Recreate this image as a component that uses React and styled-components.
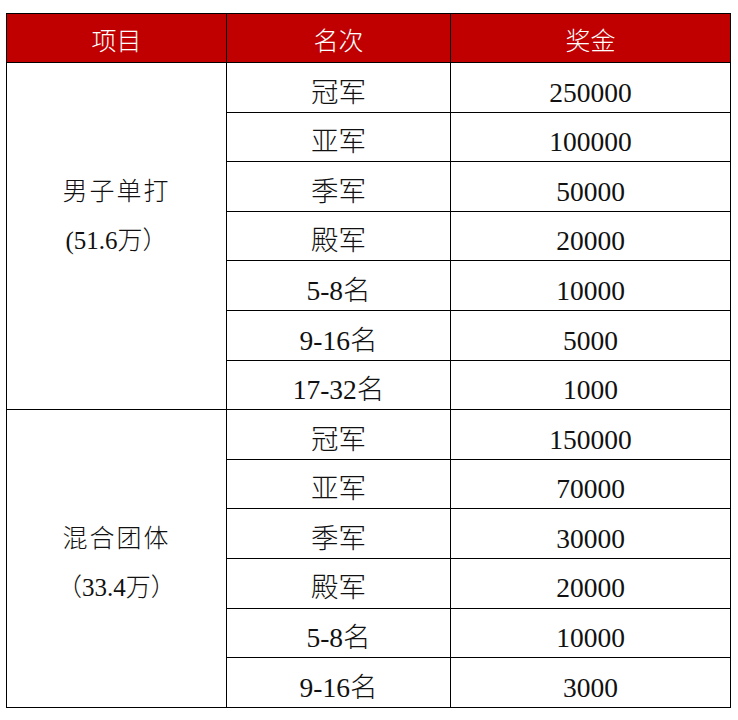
import styled, { createGlobalStyle } from "styled-components";

const GlobalStyle = createGlobalStyle`
    body {
        margin: 0;
        background: #fff;
        font-family: "Liberation Serif", "Noto Sans CJK SC", serif;
    }
`

const Wrapper = styled.div`
    padding: 13px 0 0 6px;
`

const Table = styled.table`
    border-collapse: collapse;
    width: 724px;
    table-layout: fixed;
    font-size: 27.5px;
    color: #111;
`

const HeadCell = styled.th`
    background: #c00000;
    color: #fff;
    font-weight: 300;
    height: 46px;
    padding: 2px 0 0;
    border: 1px solid #000;
    font-family: "Liberation Serif", "Noto Sans CJK SC", serif;
    font-size: 25px;
`

const Cell = styled.td`
    height: 38.6px;
    padding: 10px 0 0;
    border: 1px solid #000;
    text-align: center;
    vertical-align: middle;
    line-height: 1;
    font-weight: 300;
`

const GroupCell = styled.td`
    padding: ${(p) => p.$top}px 0 ${(p) => p.$bottom}px 0;
    border: 1px solid #000;
    text-align: center;
    vertical-align: middle;
    line-height: 49px;
    font-size: 25px;
    font-weight: 300;
`

const GroupName = styled.div`
    letter-spacing: 2px;
`

const groups = [
    {
        name: "男子单打",
        total: "(51.6万）",
        top: 0,
        bottom: 40,
        rows: [
            ["冠军", "250000"],
            ["亚军", "100000"],
            ["季军", "50000"],
            ["殿军", "20000"],
            ["5-8名", "10000"],
            ["9-16名", "5000"],
            ["17-32名", "1000"],
        ],
    },
    {
        name: "混合团体",
        total: "（33.4万）",
        top: 10,
        bottom: 0,
        rows: [
            ["冠军", "150000"],
            ["亚军", "70000"],
            ["季军", "30000"],
            ["殿军", "20000"],
            ["5-8名", "10000"],
            ["9-16名", "3000"],
        ],
    },
];

function App() {
    return (
        <Wrapper>
            <GlobalStyle />
            <Table>
                <colgroup>
                    <col style={{ width: 220 }} />
                    <col style={{ width: 224 }} />
                    <col style={{ width: 280 }} />
                </colgroup>
                <thead>
                    <tr>
                        <HeadCell>项目</HeadCell>
                        <HeadCell>名次</HeadCell>
                        <HeadCell>奖金</HeadCell>
                    </tr>
                </thead>
                <tbody>
                    {groups.map((g) =>
                        g.rows.map((r, i) => (
                            <tr key={g.name + i}>
                                {i === 0 && (
                                    <GroupCell rowSpan={g.rows.length} $top={g.top} $bottom={g.bottom}>
                                        <GroupName>{g.name}</GroupName>
                                        <div>{g.total}</div>
                                    </GroupCell>
                                )}
                                <Cell>{r[0]}</Cell>
                                <Cell>{r[1]}</Cell>
                            </tr>
                        ))
                    )}
                </tbody>
            </Table>
        </Wrapper>
    );
}

export default App;
